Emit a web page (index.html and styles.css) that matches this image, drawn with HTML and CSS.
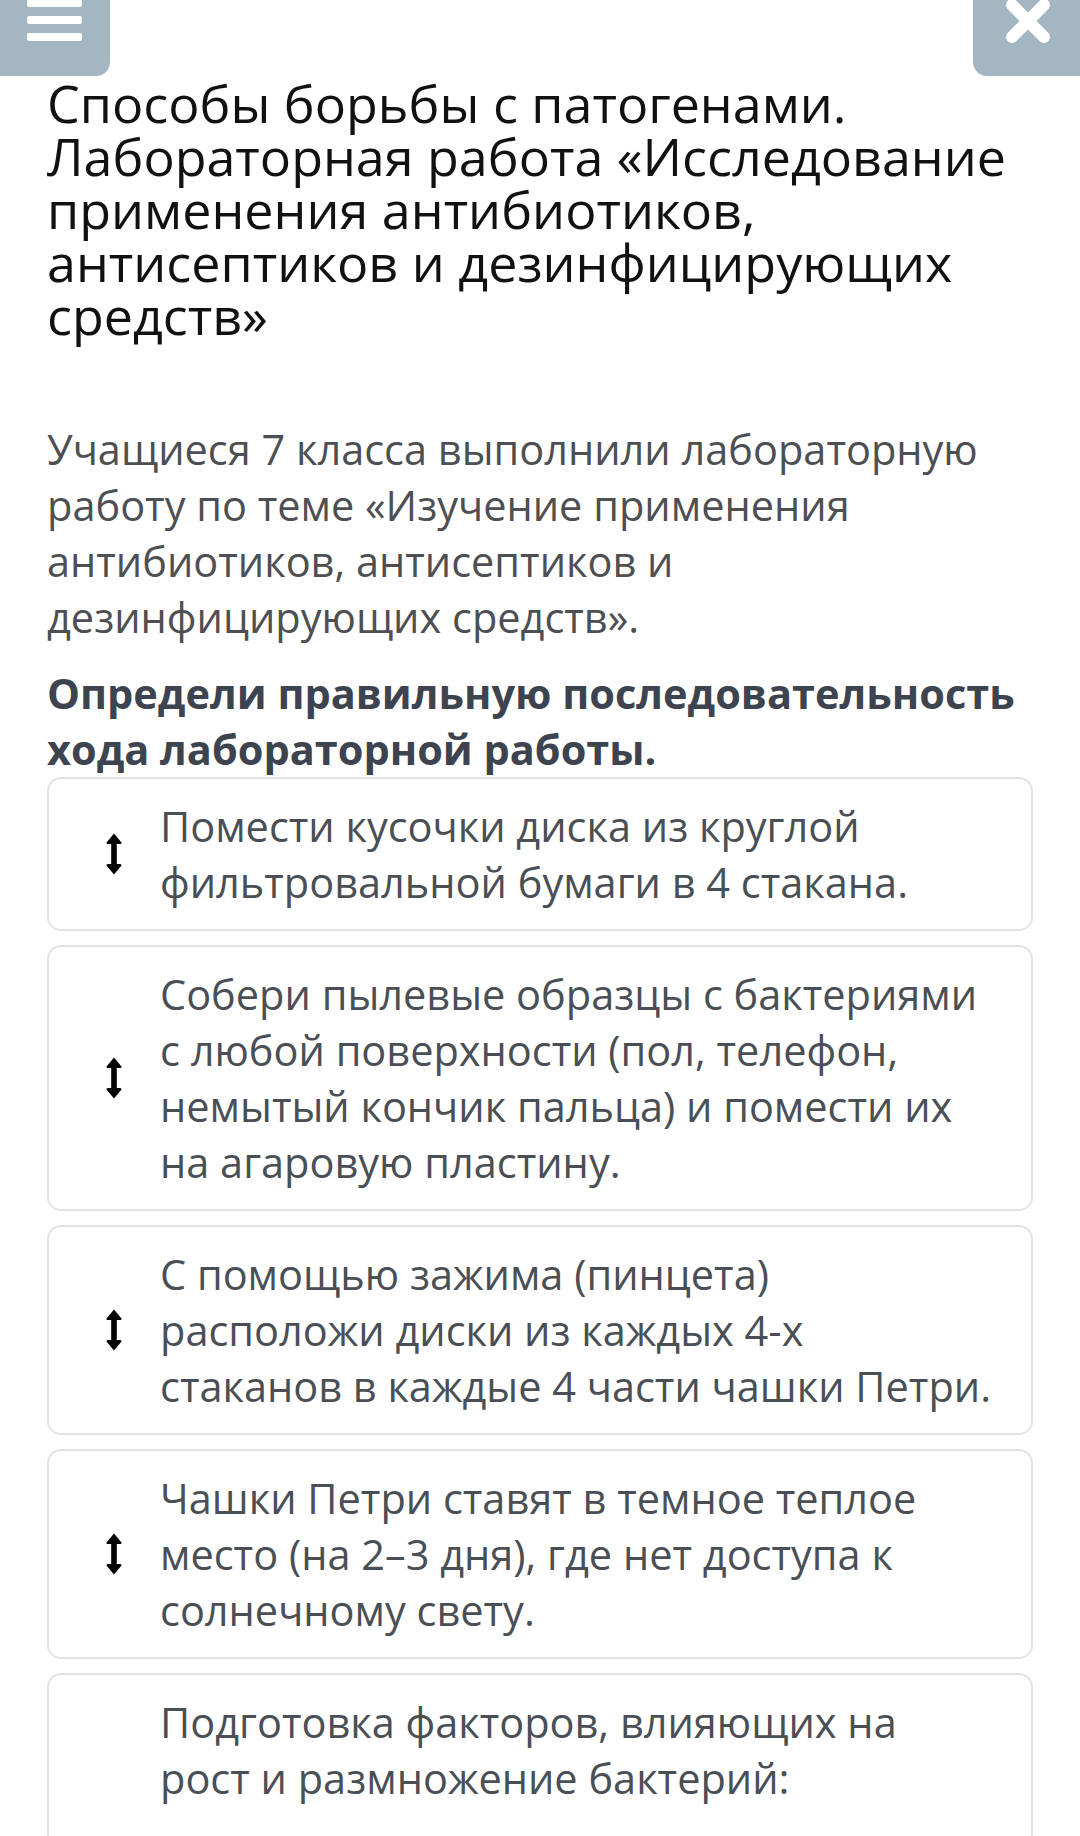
FILE: index.html
```html
<!DOCTYPE html>
<html lang="ru">
<head>
<meta charset="utf-8">
<title>Способы борьбы с патогенами</title>
<link rel="stylesheet" href="styles.css">
</head>
<body>
<header class="topbar">
  <button class="tbtn tbtn-menu" aria-label="Меню">
    <span class="bar"></span><span class="bar"></span><span class="bar"></span>
  </button>
  <button class="tbtn tbtn-close" aria-label="Закрыть">
    <svg class="xicon" viewBox="0 0 46 46" width="46" height="46"><path d="M7 7 L39 39 M39 7 L7 39" stroke="#fff" stroke-width="12" stroke-linecap="round"/></svg>
  </button>
</header>
<main class="page">
  <h1 class="title">Способы борьбы с патогенами. Лабораторная работа «Исследование применения антибиотиков, антисептиков и дезинфицирующих средств»</h1>
  <p class="intro">Учащиеся 7 класса выполнили лабораторную работу по теме «Изучение применения антибиотиков, антисептиков и дезинфицирующих средств».</p>
  <p class="task">Определи правильную последовательность хода лабораторной работы.</p>
  <ul class="list">
    <li class="card"><span class="handle"><svg class="arr" viewBox="0 0 16 42" width="16" height="42"><path d="M8 0.5 L15.5 9.5 Q16 11 14 11 L10.8 11 L10.8 31 L14 31 Q16 31 15.5 32.5 L8 41.5 L0.5 32.5 Q0 31 2 31 L5.2 31 L5.2 11 L2 11 Q0 11 0.5 9.5 Z" fill="#000"/></svg></span><span class="ctext">Помести кусочки диска из круглой фильтровальной бумаги в 4 стакана.</span></li>
    <li class="card"><span class="handle"><svg class="arr" viewBox="0 0 16 42" width="16" height="42"><path d="M8 0.5 L15.5 9.5 Q16 11 14 11 L10.8 11 L10.8 31 L14 31 Q16 31 15.5 32.5 L8 41.5 L0.5 32.5 Q0 31 2 31 L5.2 31 L5.2 11 L2 11 Q0 11 0.5 9.5 Z" fill="#000"/></svg></span><span class="ctext">Собери пылевые образцы с бактериями с любой поверхности (пол, телефон, немытый кончик пальца) и помести их на агаровую пластину.</span></li>
    <li class="card"><span class="handle"><svg class="arr" viewBox="0 0 16 42" width="16" height="42"><path d="M8 0.5 L15.5 9.5 Q16 11 14 11 L10.8 11 L10.8 31 L14 31 Q16 31 15.5 32.5 L8 41.5 L0.5 32.5 Q0 31 2 31 L5.2 31 L5.2 11 L2 11 Q0 11 0.5 9.5 Z" fill="#000"/></svg></span><span class="ctext">С помощью зажима (пинцета) расположи диски из каждых 4-х стаканов в каждые 4 части чашки Петри.</span></li>
    <li class="card"><span class="handle"><svg class="arr" viewBox="0 0 16 42" width="16" height="42"><path d="M8 0.5 L15.5 9.5 Q16 11 14 11 L10.8 11 L10.8 31 L14 31 Q16 31 15.5 32.5 L8 41.5 L0.5 32.5 Q0 31 2 31 L5.2 31 L5.2 11 L2 11 Q0 11 0.5 9.5 Z" fill="#000"/></svg></span><span class="ctext">Чашки Петри ставят в темное теплое место (на 2–3 дня), где нет доступа к солнечному свету.</span></li>
    <li class="card card-long"><span class="handle"></span><span class="ctext">Подготовка факторов, влияющих на рост и размножение бактерий:</span></li>
  </ul>
</main>
</body>
</html>
```

FILE: styles.css
```css
html, body {
  margin: 0;
  padding: 0;
  background: #fff;
}
body {
  width: 1080px;
  height: 1836px;
  overflow: hidden;
  font-family: "Open Sans", "Noto Sans", sans-serif;
}
.topbar {
  display: flex;
  justify-content: space-between;
  height: 76px;
}
.tbtn {
  border: 0;
  padding: 0;
  margin: 0;
  background: #a4b6c2;
  height: 76px;
  display: flex;
  overflow: hidden;
}
.tbtn-menu {
  width: 110px;
  border-radius: 0 0 14px 0;
  flex-direction: column;
  gap: 9px;
  padding: 0 0 0 27px;
  margin-top: -1px;
  height: 77px;
}
.bar {
  display: block;
  width: 55px;
  height: 8px;
  background: #fff;
  border-radius: 2px;
}
.tbtn-close {
  width: 107px;
  border-radius: 0 0 0 14px;
  justify-content: flex-start;
  align-items: flex-start;
}
.xicon {
  display: block;
  margin: -2px 0 0 32px;
}
.page {
  padding: 0 47px;
}
.title {
  margin: 0;
  font-weight: 400;
  font-size: 52px;
  line-height: 53px;
  color: #111;
}
.intro {
  margin: 80px 0 0;
  font-size: 41.5px;
  line-height: 56px;
  color: #4d4f52;
}
.task {
  margin: 20px 0 0;
  font-size: 41.5px;
  line-height: 56px;
  font-weight: 700;
  color: #3d4450;
}
.list {
  list-style: none;
  margin: 0;
  padding: 0;
}
.card {
  display: flex;
  align-items: center;
  border: 2px solid #e3e3e3;
  border-radius: 14px;
  padding: 19px 38px 19px 0;
  margin-bottom: 14px;
}
.card-long {
  align-items: flex-start;
  padding-bottom: 40px;
}
.handle {
  flex: 0 0 111px;
  display: flex;
  padding-left: 57px;
  box-sizing: border-box;
}
.arr {
  display: block;
}
.ctext {
  font-size: 41.5px;
  line-height: 56px;
  color: #4a4f56;
}
```
